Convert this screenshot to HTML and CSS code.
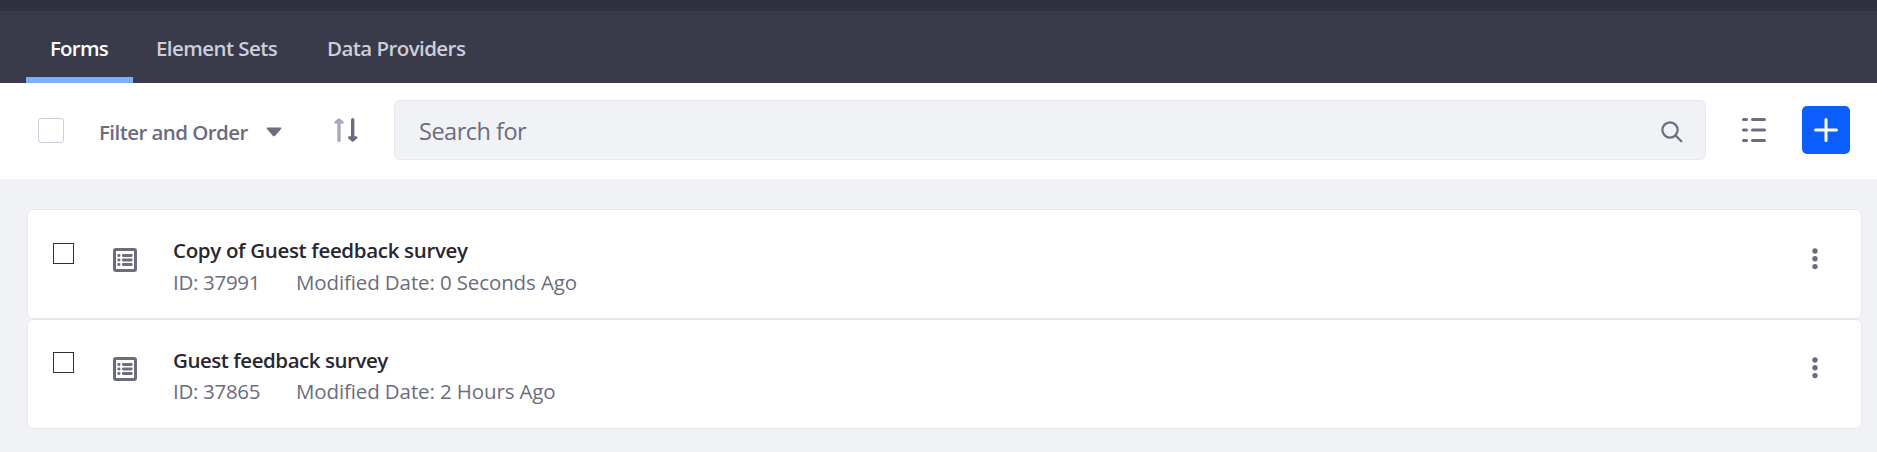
FILE: index.html
```
<!DOCTYPE html>
<html lang="en">
<head>
<meta charset="utf-8">
<title>Forms</title>
<link rel="stylesheet" href="styles.css">
</head>
<body>
<div class="topstrip"></div>
<nav class="tabs">
  <a class="tab active"><span>Forms</span></a>
  <a class="tab elements"><span>Element Sets</span></a>
  <a class="tab providers"><span>Data Providers</span></a>
</nav>
<div class="toolbar">
  <span class="check-all"></span>
  <span class="filter">Filter and Order</span>
  <svg class="caret" width="16" height="10" viewBox="0 0 16 10"><path d="M1.200.500h13.600q1 .300.400 1.200L9.200 8.800q-1.200 1-2.400 0L.800 1.700Q.200.800 1.200.500z" fill="#6b6c7e"/></svg>
  <svg class="sort" width="24" height="24" viewBox="0 0 24 24" fill="none" stroke-linecap="round" stroke-linejoin="round">
    <g stroke="#a7a9bc" fill="#a7a9bc"><path d="M5 3v19.300" stroke-width="3.400"/><path d="M1.500 4.500L5 1.400 8.500 4.500z" stroke-width="2.400"/></g>
    <g stroke="#6b6c7e" fill="#6b6c7e"><path d="M18.700 1.700V21" stroke-width="3.400"/><path d="M15.200 19.500l3.500 3.100 3.500-3.100z" stroke-width="2.400"/></g>
  </svg>
  <div class="search">
    <span class="placeholder">Search for</span>
    <svg width="22" height="22" viewBox="0 0 22 22" fill="none" stroke="#6b6c7e" stroke-width="2.200" stroke-linecap="round"><circle cx="9" cy="9" r="7.600"/><path d="M14.500 14.500l5.800 5.800"/></svg>
  </div>
  <svg class="view" width="24" height="24" viewBox="0 0 24 24" stroke="#6b6c7e" stroke-width="3" stroke-linecap="round"><path d="M1.500 1.500h3M10.500 1.500h12M1.500 12h3M10.500 12h12M1.500 22.500h3M10.500 22.500h12"/></svg>
  <button class="add"><svg width="24" height="24" viewBox="0 0 24 24" stroke="#fff" stroke-width="3" stroke-linecap="round"><path d="M12 1.500v21M1.500 12h21"/></svg></button>
</div>
<main class="list">
  <article class="card">
    <span class="box"></span>
    <svg class="form-icon" width="24" height="24" viewBox="0 0 24 24" fill="none" stroke="#6b6c7e" stroke-linecap="round"><rect x="1.500" y="1.500" width="21" height="21" rx="1.500" stroke-width="3"/><path d="M5.700 7.500h.400M10.300 7.500h8M5.700 12h.400M10.300 12h8M5.700 16.500h.400M10.300 16.500h8" stroke-width="2.800"/></svg>
    <div class="info">
      <div><span class="title t1">Copy of Guest feedback survey</span></div>
      <div class="meta"><span class="id">ID: 37991</span><span class="date">Modified Date: 0 Seconds Ago</span></div>
    </div>
    <svg class="dots" width="6" height="22" viewBox="0 0 6 22" fill="#6b6c7e"><circle cx="3" cy="3" r="2.700"/><circle cx="3" cy="10.800" r="2.700"/><circle cx="3" cy="18.600" r="2.700"/></svg>
  </article>
  <article class="card">
    <span class="box"></span>
    <svg class="form-icon" width="24" height="24" viewBox="0 0 24 24" fill="none" stroke="#6b6c7e" stroke-linecap="round"><rect x="1.500" y="1.500" width="21" height="21" rx="1.500" stroke-width="3"/><path d="M5.700 7.500h.400M10.300 7.500h8M5.700 12h.400M10.300 12h8M5.700 16.500h.400M10.300 16.500h8" stroke-width="2.800"/></svg>
    <div class="info">
      <div><span class="title t2">Guest feedback survey</span></div>
      <div class="meta"><span class="id">ID: 37865</span><span class="date">Modified Date: 2 Hours Ago</span></div>
    </div>
    <svg class="dots" width="6" height="22" viewBox="0 0 6 22" fill="#6b6c7e"><circle cx="3" cy="3" r="2.700"/><circle cx="3" cy="10.800" r="2.700"/><circle cx="3" cy="18.600" r="2.700"/></svg>
  </article>
</main>
</body>
</html>
```
FILE: styles.css
```
* { box-sizing: border-box; }
body {
  margin: 0;
  height: 452px;
  overflow: hidden;
  background: #f1f2f5;
  font-family: "Open Sans", "Noto Sans", sans-serif;
  font-size: 20.5px;
  color: #6b6c7e;
}
svg { display: block; flex: none; }
span { white-space: nowrap; }
.topstrip { height: 11px; background: #30313f; }
.tabs { display: flex; height: 72px; padding-left: 26px; background: #393a4a; }
.tab {
  display: flex;
  align-items: center;
  padding: 8px 0 0 24px;
  font-weight: 600;
  letter-spacing: -0.57px;
  color: #cdced9;
  border-bottom: 6px solid transparent;
}
.active { width: 107px; color: #fff; border-bottom-color: #80acff; letter-spacing: -0.8px; }
.elements { width: 170px; padding-left: 23px; }
.toolbar {
  display: flex;
  align-items: center;
  height: 96px;
  padding: 0 27px 2px 38px;
  background: #fff;
}
.check-all { width: 26px; height: 25px; margin-top: 1px; border: 1px solid #cdced9; border-radius: 3px; }
.filter { width: 150px; margin-left: 35px; padding-top: 3px; font-weight: 600; letter-spacing: -0.57px; }
.caret { margin: 4px 0 0 17px; }
.sort { margin-left: 52px; }
.search {
  display: flex;
  align-items: center;
  justify-content: space-between;
  flex: 1;
  height: 60px;
  margin-left: 36px;
  padding: 0 22px 0 24px;
  background: #f1f2f5;
  border: 1px solid #e7e7ed;
  border-radius: 6px;
  font-size: 23.5px;
}
.search svg { margin-top: 3px; }
.placeholder { padding-top: 2px; letter-spacing: -0.5px; }
.view { margin: 0 36px; }
.add {
  display: grid;
  place-items: center;
  width: 48px;
  height: 48px;
  padding: 0;
  border: 0;
  border-radius: 5px;
  background: #0b5fff;
}
.list { padding: 30px 15px 0 27px; }
.card {
  display: flex;
  align-items: flex-start;
  height: 110px;
  padding: 0 43px 0 25px;
  background: #fff;
  border: 1px solid #e7e7ed;
  border-radius: 6px;
}
.box { width: 21px; height: 21px; margin-top: 33px; border: 1px solid #333; }
.form-icon { margin: 38px 0 0 39px; }
.info { flex: 1; margin: 24px 0 0 36px; }
.info > div { display: flex; height: 32px; line-height: 32px; }
.title { font-weight: 600; color: #272833; }
.t1 { letter-spacing: -0.33px; }
.t2 { letter-spacing: -0.46px; }
.meta { letter-spacing: -0.12px; }
.id { width: 123px; letter-spacing: -0.3px; }
.dots { margin-top: 38px; }
.card + .card .box { margin-top: 32px; }
.card + .card .form-icon,
.card + .card .dots { margin-top: 37px; }
.card + .card .meta { margin-top: -1px; }
```
